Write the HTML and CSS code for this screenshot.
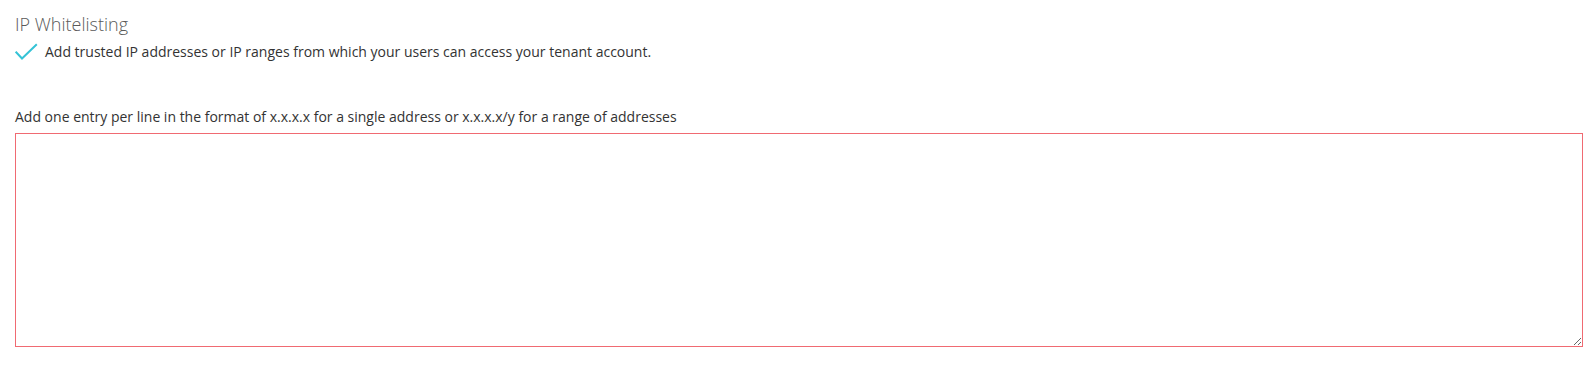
FILE: index.html
```html
<!DOCTYPE html>
<html>
<head>
<meta charset="utf-8">
<link rel="stylesheet" href="styles.css">
</head>
<body>
<div class="section">
  <h2 class="title">IP Whitelisting</h2>
  <div class="desc">
    <svg class="check" width="23" height="18" viewBox="0 0 23 18"><path d="M0.7 8.7 L7 15.5 L21.8 1.2" fill="none" stroke="#35c3d6" stroke-width="2"/></svg>
    <span>Add trusted IP addresses or IP ranges from which your users can access your tenant account.</span>
  </div>
  <label class="label" for="ips">Add one entry per line in the format of x.x.x.x for a single address or x.x.x.x/y for a range of addresses</label>
  <textarea id="ips" class="field"></textarea>
</div>
</body>
</html>
```
FILE: styles.css
```css
html, body { margin: 0; padding: 0; background: #fff; }
body { font-family: "Open Sans", sans-serif; color: #333; }
.section { padding: 12px 10px 0 15px; display: flex; flex-direction: column; }
.title { margin: 0; font-size: 18px; font-weight: 300; color: #5a5a5a; line-height: 24px; }
.desc { display: flex; align-items: flex-start; gap: 7px; margin-top: 6px; font-size: 14px; line-height: 20px; color: #333; }
.check { flex: none; margin-top: 1px; }
.label { margin-top: 45px; font-size: 14px; line-height: 19px; color: #333; display: block; }
.field { margin-top: 7px; width: 1568px; height: 214px; box-sizing: border-box; border: 1px solid #f06a72; border-radius: 0; outline: none; padding: 6px; font-family: inherit; resize: both; }
```
